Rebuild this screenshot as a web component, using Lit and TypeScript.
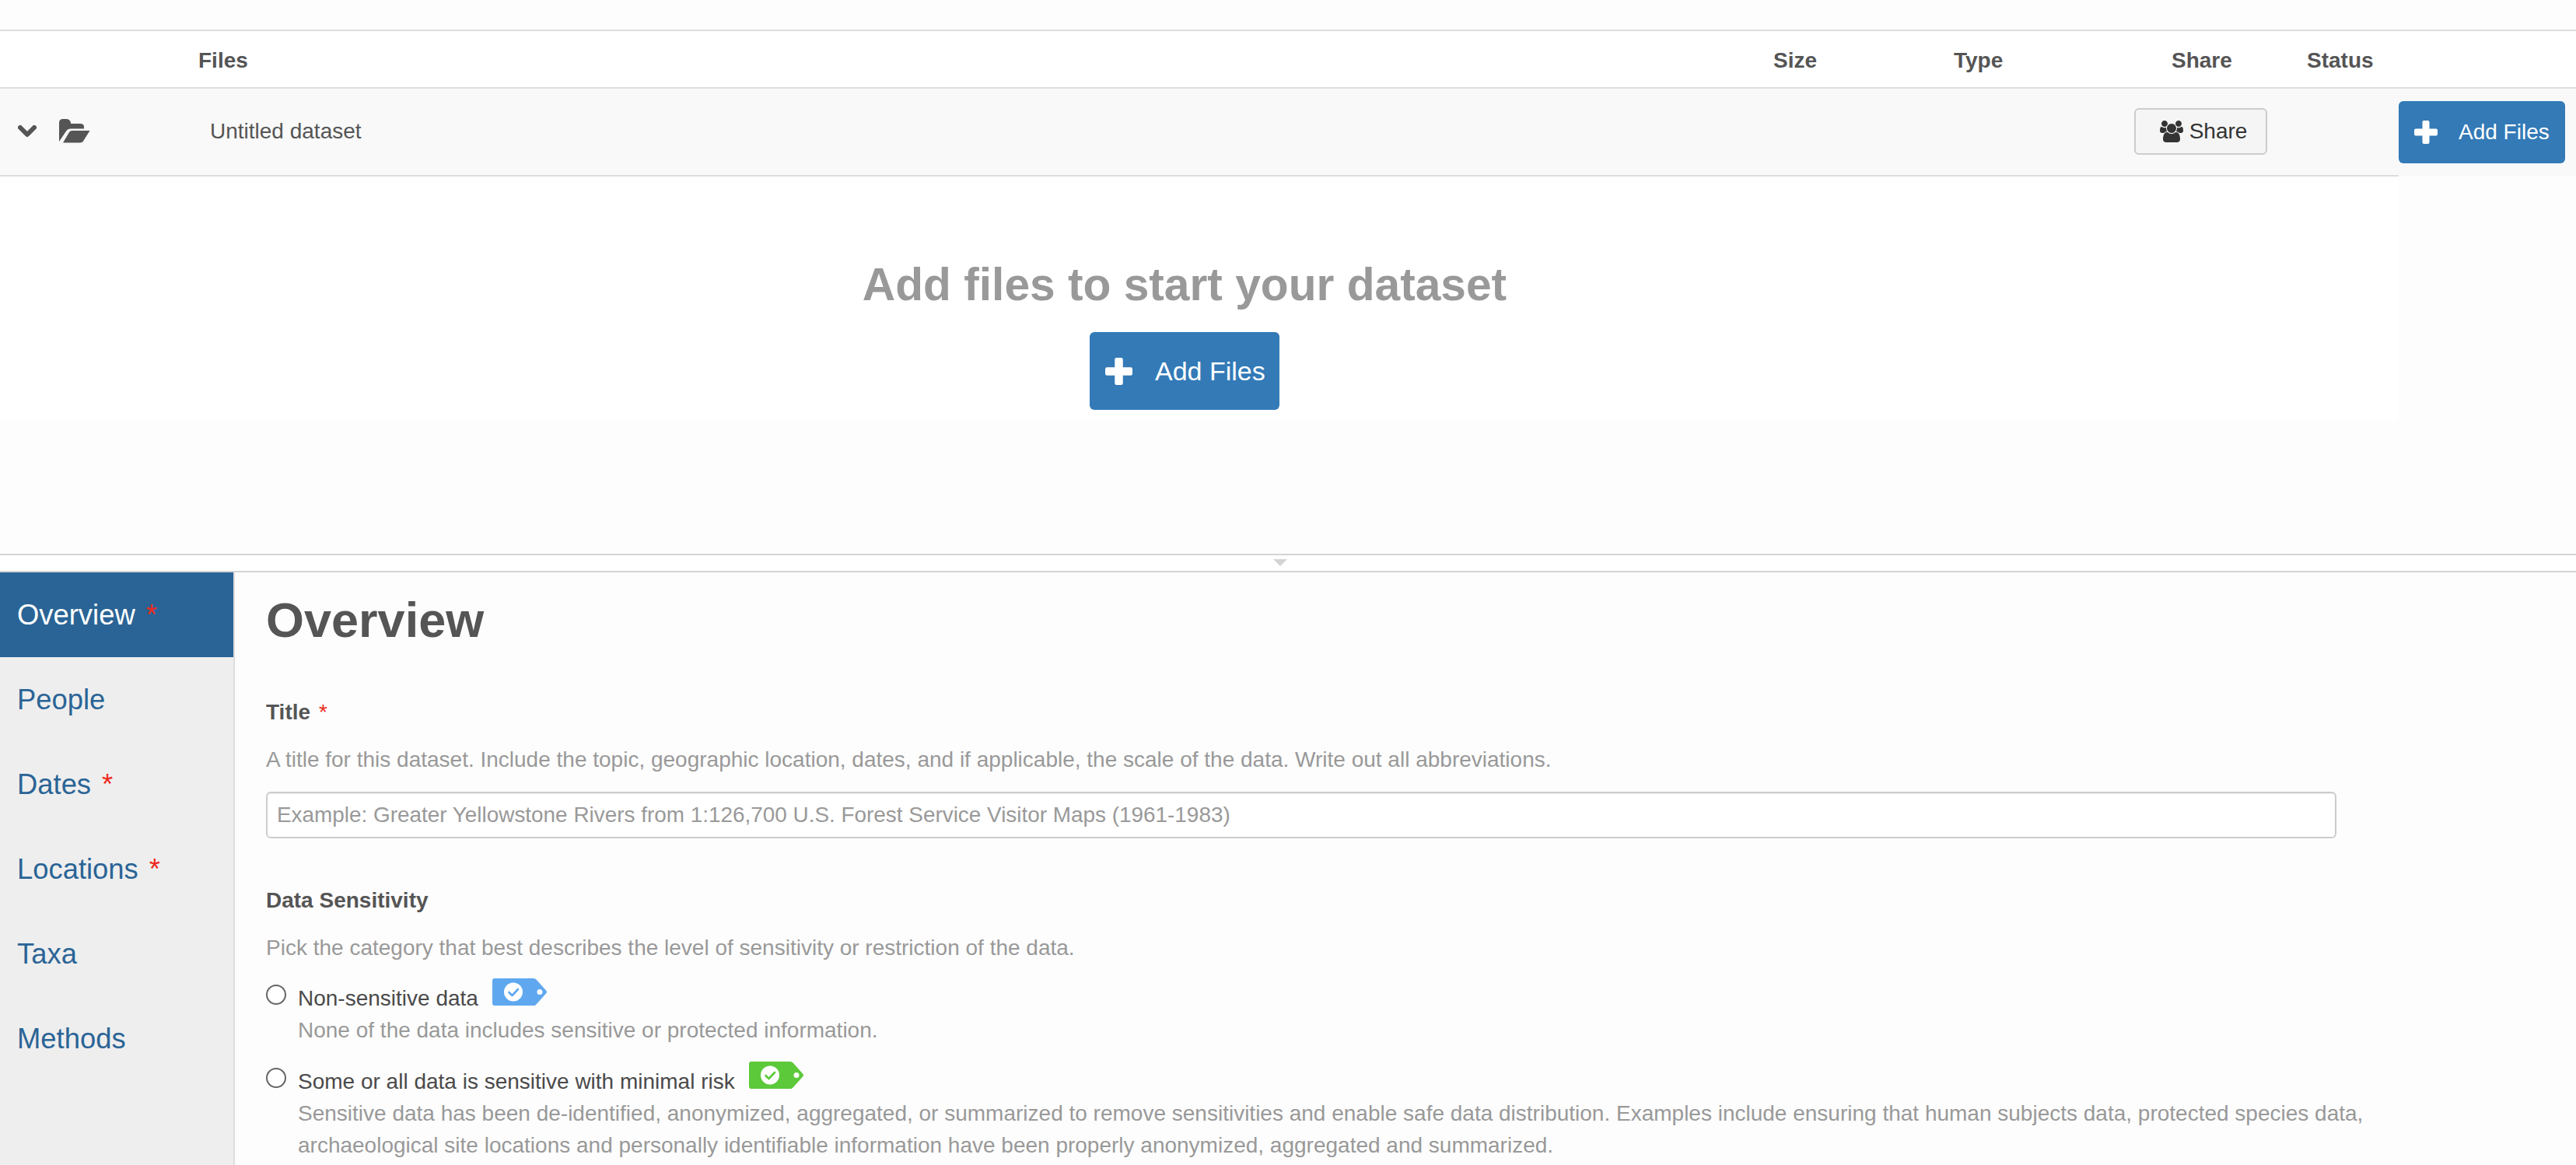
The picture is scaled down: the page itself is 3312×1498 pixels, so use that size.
import { LitElement, html, css, svg } from "lit";
import { customElement } from "lit/decorators.js";

const USERS = "M657 896q-162 5-265 128h-134q-82 0-138-40.5t-56-118.5q0-353 124-353 6 0 43.5 21t97.5 42.5 119 21.5q67 0 133-23-5 37-5 66 0 139 81 256zm1071 637q0 120-73 189.5t-194 69.5h-874q-121 0-194-69.5t-73-189.5q0-53 3.5-103.5t14-109 26.5-108.5 43-97.5 62-81 85.5-53.5 111.5-20q10 0 43 21.5t73 48 107 48 135 21.5 135-21.5 107-48 73-48 43-21.5q61 0 111.5 20t85.5 53.5 62 81 43 97.5 26.5 108.5 14 109 3.5 103.5zm-1024-1277q0 106-75 181t-181 75-181-75-75-181 75-181 181-75 181 75 75 181zm704 384q0 159-112.5 271.5t-271.5 112.5-271.5-112.5-112.5-271.5 112.5-271.5 271.5-112.5 271.5 112.5 112.5 271.5zm576 225q0 78-56 118.5t-138 40.5h-134q-103-123-265-128 81-117 81-256 0-29-5-66 66 23 133 23 59 0 119-21.5t97.5-42.5 43.5-21q124 0 124 353zm-128-609q0 106-75 181t-181 75-181-75-75-181 75-181 181-75 181 75 75 181z";

const plus = (size: number) => html`<svg class="plus" width=${size} height=${size} viewBox="0 0 30 30" aria-hidden="true"><path fill="#fff" d="M12.500 0h5a2 2 0 0 1 2 2v8.500H28a2 2 0 0 1 2 2v5a2 2 0 0 1-2 2h-8.500V28a2 2 0 0 1-2 2h-5a2 2 0 0 1-2-2v-8.500H2a2 2 0 0 1-2-2v-5a2 2 0 0 1 2-2h8.500V2a2 2 0 0 1 2-2z"/></svg>`;

const tag = (fill: string) => html`<svg class="tag" width="70" height="35" viewBox="0 0 70 35" aria-hidden="true">
  <path fill=${fill} fill-rule="evenodd" d="M3 0H53q2 0 3.500 1.500L69 15.500q2 2 0 4L56.500 33.500Q55 35 53 35H3q-3 0-3-3V3q0-3 3-3zM61 14a3.500 3.500 0 1 0 0 7 3.500 3.500 0 0 0 0-7z"/>
  <circle cx="27" cy="17.500" r="12" fill="#fff"/>
  ${svg`<path d="M21.500 18l4 4 7.500-8" fill="none" stroke=${fill} stroke-width="2.600" stroke-linecap="round" stroke-linejoin="round"/>`}
</svg>`;

@customElement("app-root")
export class AppRoot extends LitElement {
  static styles = css`
    :host {
      display: block;
      width: 3312px;
      height: 1498px;
      overflow: hidden;
      background: #fdfdfd;
      font-family: "Liberation Sans", Arial, sans-serif;
      font-size: 28px;
      color: #555;
    }
    * { box-sizing: border-box; }
    .top { height: 712px; padding-top: 38px; }
    .head {
      display: grid;
      grid-template-columns: 255px 2025px 232px 280px 174px 1fr;
      height: 76px;
      padding-top: 2px;
      line-height: 72px;
      font-weight: 700;
      background: #fff;
      border-top: 2px solid #ddd;
      border-bottom: 2px solid #ddd;
    }
    .row { display: flex; height: 112px; background: #f9f9f9; }
    .row-main {
      width: 3084px;
      height: 113px;
      flex: none;
      display: flex;
      align-items: center;
      padding: 0 0 2px 23px;
      border-bottom: 2px solid #ddd;
    }
    .icons { display: flex; align-items: center; width: 247px; flex: none; }
    .chev { margin-right: 29px; flex: none; }
    .folder { flex: none; }
    .name { width: 2474px; flex: none; white-space: nowrap; }
    .share-btn {
      display: flex;
      align-items: center;
      justify-content: center;
      gap: 8px;
      width: 171px;
      height: 60px;
      font: inherit;
      color: #333;
      background: #f5f5f5;
      border: 2px solid #ccc;
      border-radius: 6px;
      padding: 0 0 0 7px;
    }
    .action { flex: 1; padding-top: 16px; }
    .btn {
      display: flex;
      align-items: center;
      font-family: inherit;
      color: #fff;
      background: #337ab7;
      border: 0;
      border-radius: 6px;
      padding: 0;
    }
    .btn-sm { width: 214px; height: 80px; font-size: 28px; padding-left: 20px; gap: 27px; }
    .btn-lg { width: 244px; height: 100px; font-size: 34px; padding-left: 20px; gap: 29px; }
    .empty {
      width: 3083px;
      height: 313px;
      margin-top: 1px;
      background: #fff;
      display: flex;
      flex-direction: column;
      align-items: center;
      padding: 103px 37px 0 0;
    }
    .empty h2 {
      margin: 0 0 25px;
      font-size: 58.700px;
      line-height: 72px;
      font-weight: 700;
      color: #999;
    }
    .handle {
      display: flex;
      justify-content: center;
      height: 24px;
      padding: 5px 21px 0 0;
      background: #fff;
      border-top: 2px solid #d4d4d4;
      border-bottom: 2px solid #d4d4d4;
    }
    .tri {
      width: 0;
      height: 0;
      border-left: 9px solid transparent;
      border-right: 9px solid transparent;
      border-top: 9px solid #d4d4d4;
    }
    .bottom { display: flex; height: 762px; }
    .side {
      width: 302px;
      flex: none;
      background: #eee;
      border-right: 2px solid #ddd;
    }
    .side a {
      display: block;
      height: 109px;
      line-height: 109px;
      padding-left: 22px;
      font-size: 36.400px;
      color: #2a6496;
      white-space: nowrap;
    }
    .side a.on { background: #2a6496; color: #fff; }
    .side .req { color: #ee2a1e; margin-left: 14px; }
    .main { flex: 1; padding: 26px 250px 0 40px; }
    h1 {
      margin: 0 0 63px;
      font-size: 63px;
      line-height: 70px;
      font-weight: 700;
      color: #555;
    }
    .label { font-weight: 700; line-height: 41px; margin-bottom: 20px; }
    .label .req { color: #ee2a1e; font-weight: 400; margin-left: 11px; }
    .help { line-height: 41px; color: #999; }
    input.text {
      display: block;
      width: 2662px;
      height: 60px;
      margin: 21px 0 59px;
      padding: 0 12px;
      font: inherit;
      font-size: 27.900px;
      color: #555;
      background: #fff;
      border: 2px solid #ccc;
      border-radius: 6px;
      box-shadow: inset 0 1px 1px rgba(0,0,0,.075);
    }
    input.text::placeholder { color: #999; opacity: 1; }
    .options { margin-top: 24px; display: flex; flex-direction: column; gap: 25px; }
    .opt { display: grid; grid-template-columns: 41px 1fr; line-height: 41px; }
    .radio {
      appearance: none;
      width: 26px;
      height: 26px;
      margin: 3px 0 0;
      background: #fff;
      border: 2px solid #666;
      border-radius: 50%;
    }
    .opt-title { display: flex; color: #4a4a4a; white-space: nowrap; }
    .tag { margin: -5px 0 0 18px; flex: none; }
    .opt-desc { grid-column: 2; color: #999; }
  `;

  render() {
    const nav: [string, boolean][] = [["Overview", true], ["People", false], ["Dates", true], ["Locations", true], ["Taxa", false], ["Methods", false]];
    return html`
      <div class="top">
        <div class="head">
          <span></span><span>Files</span><span>Size</span><span>Type</span><span>Share</span><span>Status</span>
        </div>
        <div class="row">
          <div class="row-main">
            <div class="icons">
              <svg class="chev" width="24" height="16" viewBox="0 0 24 16" aria-hidden="true"><path d="M3 3l9 9 9-9" fill="none" stroke="#555" stroke-width="6" stroke-linecap="round" stroke-linejoin="round"/></svg>
              <svg class="folder" width="40" height="31" viewBox="0 0 40 31" aria-hidden="true"><path fill="#555" d="M0 5Q0 0 5 0H9Q14 0 15 5V6H27Q32 6 32 10V12.500H15Q11 12.500 9.500 15L0 29ZM5 30.500L13 17Q14 15 17 15H39.500L31 28.500Q30 30.500 27 30.500Z"/></svg>
            </div>
            <span class="name">Untitled dataset</span>
            <button class="share-btn">
              <svg width="30" height="28" viewBox="64 0 1920 1792" aria-hidden="true"><path fill="#333" d=${USERS}/></svg>
              Share
            </button>
          </div>
          <div class="action">
            <button class="btn btn-sm">${plus(30)}Add Files</button>
          </div>
        </div>
        <div class="empty">
          <h2>Add files to start your dataset</h2>
          <button class="btn btn-lg">${plus(35)}Add Files</button>
        </div>
      </div>
      <div class="handle"><div class="tri"></div></div>
      <div class="bottom">
        <nav class="side">
          ${nav.map(([n, r], i) => html`<a class=${i === 0 ? "on" : ""}>${n}${r ? html`<span class="req">*</span>` : ""}</a>`)}
        </nav>
        <div class="main">
          <h1>Overview</h1>
          <div class="label">Title<span class="req">*</span></div>
          <div class="help">A title for this dataset. Include the topic, geographic location, dates, and if applicable, the scale of the data. Write out all abbreviations.</div>
          <input class="text" placeholder="Example: Greater Yellowstone Rivers from 1:126,700 U.S. Forest Service Visitor Maps (1961-1983)" />
          <div class="label">Data Sensitivity</div>
          <div class="help">Pick the category that best describes the level of sensitivity or restriction of the data.</div>
          <div class="options">
            <div class="opt">
              <input class="radio" type="radio" name="s" />
              <div class="opt-title">Non-sensitive data${tag("#5fa8f0")}</div>
              <div class="opt-desc">None of the data includes sensitive or protected information.</div>
            </div>
            <div class="opt">
              <input class="radio" type="radio" name="s" />
              <div class="opt-title">Some or all data is sensitive with minimal risk${tag("#5cc93a")}</div>
              <div class="opt-desc">Sensitive data has been de-identified, anonymized, aggregated, or summarized to remove sensitivities and enable safe data distribution. Examples include ensuring that human subjects data, protected species data, archaeological site locations and personally identifiable information have been properly anonymized, aggregated and summarized.</div>
            </div>
          </div>
        </div>
      </div>
    `;
  }
}
